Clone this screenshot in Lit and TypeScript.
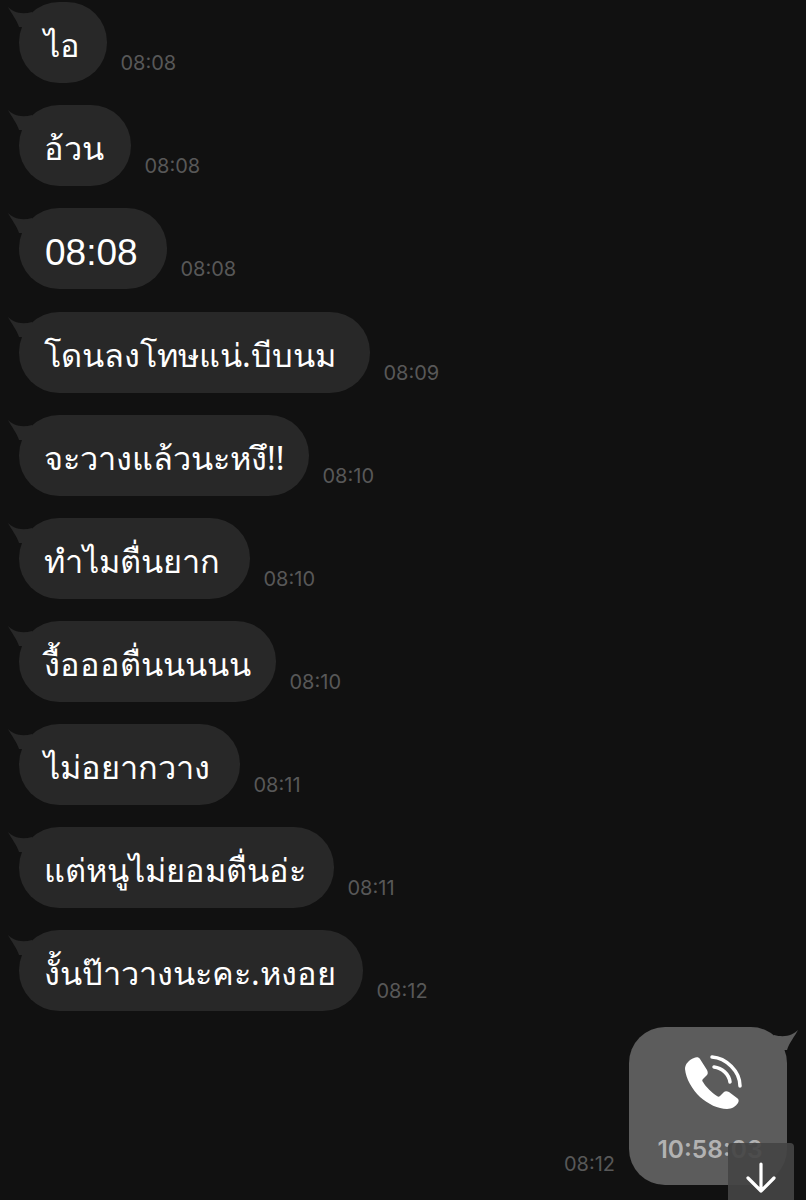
import { html, css, LitElement } from 'lit';
import { customElement } from 'lit/decorators.js';
import { classMap } from 'lit/directives/class-map.js';

const messages = [
  { text: 'ไอ', time: '08:08', width: 88 },
  { text: 'อ้วน', time: '08:08', width: 112 },
  { text: '08:08', time: '08:08', width: 148, digits: true },
  { text: 'โดนลงโทษแน่.บีบนม', time: '08:09', width: 351 },
  { text: 'จะวางแล้วนะหงึ!!', time: '08:10', width: 290 },
  { text: 'ทำไมตื่นยาก', time: '08:10', width: 231 },
  { text: 'งื้อออตื่นนนนน', time: '08:10', width: 257 },
  { text: 'ไม่อยากวาง', time: '08:11', width: 221 },
  { text: 'แต่หนูไม่ยอมตื่นอ่ะ', time: '08:11', width: 315 },
  { text: 'งั้นป๊าวางนะคะ.หงอย', time: '08:12', width: 344 },
];

@customElement('app-root')
export class AppRoot extends LitElement {
  static styles = css`
    :host {
      display: block;
      width: 806px;
      height: 1200px;
      overflow: hidden;
      position: relative;
      background: #111111;
      font-family: 'Noto Sans', 'Liberation Sans', 'DejaVu Sans', sans-serif;
    }
    .list {
      display: flex;
      flex-direction: column;
      gap: 22.1px;
      padding: 2.3px 0 0 19px;
    }
    .row {
      display: flex;
      align-items: flex-end;
      gap: 13.5px;
    }
    .bubble {
      position: relative;
      height: 81px;
      box-sizing: border-box;
      padding: 6px 0 0 25px;
      display: flex;
      align-items: center;
      background: #282828;
      border-radius: 40px;
      color: #ffffff;
      font-size: 32.5px;
      white-space: nowrap;
    }
    .bubble.digits {
      font-family: 'Liberation Sans', sans-serif;
      font-size: 37px;
      padding: 8px 0 0 26px;
    }
    .tail {
      position: absolute;
      left: -11px;
      top: 5px;
      width: 24px;
      height: 20px;
    }
    .time {
      color: #585858;
      font-family: 'Inter', 'Liberation Sans', sans-serif;
      font-size: 20px;
      line-height: 24px;
      padding-bottom: 8px;
    }
    .outgoing {
      display: flex;
      justify-content: flex-end;
      align-items: flex-end;
      gap: 14px;
      padding: 15.8px 19px 0 0;
    }
    .outgoing .time {
      padding-bottom: 9px;
    }
    .call {
      position: relative;
      width: 158px;
      height: 158px;
      box-sizing: border-box;
      padding: 25px 0 0 0;
      background: #5c5c5c;
      border-radius: 36px;
      display: flex;
      flex-direction: column;
      align-items: center;
      gap: 23px;
    }
    .call svg.phone {
      width: 60px;
      height: 60px;
      margin-left: 14px;
      flex: none;
    }
    .duration {
      color: #b2b2b2;
      font-family: 'Inter', 'Liberation Sans', sans-serif;
      font-size: 24.5px;
      line-height: 28px;
      font-weight: 600;
      margin-left: 4px;
    }
    .call .tail {
      left: auto;
      right: -11px;
      top: 3px;
    }
    .scroll {
      position: absolute;
      right: 12px;
      bottom: 0;
      width: 66px;
      height: 57px;
      background: rgba(68, 68, 68, 0.92);
      border-radius: 4px 4px 0 0;
      display: flex;
      justify-content: center;
      align-items: flex-start;
    }
    .scroll svg {
      width: 32px;
      height: 32px;
      margin-top: 19px;
    }
  `;

  render() {
    return html`
      <div class="list">
        ${messages.map(
          m => html`
            <div class="row">
              <div class=${classMap({ bubble: true, digits: !!m.digits })} style="width:${m.width}px">
                <svg class="tail" viewBox="0 0 24 20">
                  <path d="M0 0C5 5 13 8 24 5V20H11C9 13 3 6 0 0Z" fill="#282828"></path>
                </svg>
                ${m.text}
              </div>
              <span class="time">${m.time}</span>
            </div>
          `
        )}
      </div>
      <div class="outgoing">
        <span class="time">08:12</span>
        <div class="call">
          <svg class="tail" viewBox="0 0 24 20">
            <path d="M24 0C19 5 11 8 0 5V20H13C15 13 21 6 24 0Z" fill="#5c5c5c"></path>
          </svg>
          <svg class="phone" viewBox="0 0 60 60">
            <path
              d="M9 6C4 8 0 12 0 17C1 27 7 37 15 45C23 52 33 57 42 57C47 57 51 54 53 51C54 49 54 47 52 46L44 40C42 39 40 39 39 40L35 44C34 45 33 45 32 44C27 41 21 35 18 30C17 29 17 28 18 27L22 23C23 22 23 20 22 18L15 7C14 5 11 5 9 6Z"
              fill="#fff"
            ></path>
            <path d="M27 5C41 6 55 19 55 34" fill="none" stroke="#fff" stroke-width="3.5" stroke-linecap="round"></path>
            <path d="M29 15C37 16 44 22 45 30" fill="none" stroke="#fff" stroke-width="3.5" stroke-linecap="round"></path>
          </svg>
          <span class="duration">10:58:03</span>
        </div>
      </div>
      <div class="scroll">
        <svg viewBox="0 0 32 32">
          <path d="M16 2V29M3 16L16 29L29 16" fill="none" stroke="#fff" stroke-width="3.2" stroke-linecap="round" stroke-linejoin="round"></path>
        </svg>
      </div>
    `;
  }
}
